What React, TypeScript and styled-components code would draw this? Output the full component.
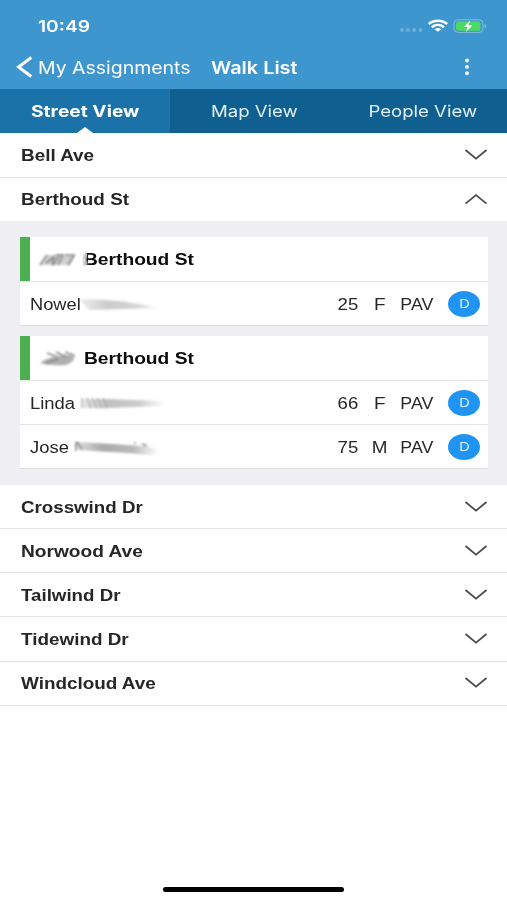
import React from "react";
import styled, { createGlobalStyle } from "styled-components";

const Global = createGlobalStyle`
  * { box-sizing: border-box; }
  html, body { margin: 0; background: #fff; overflow: hidden; }
`;

const Screen = styled.div`
  width: 507px;
  height: 900px;
  display: flex;
  flex-direction: column;
  background: #fff;
  font-family: "Liberation Sans", Arial, sans-serif;
  color: #262626;
  overflow: hidden;
`;

/* Wide lettering: glyphs are stretched horizontally from one edge. */
const Text = styled.span<{ $k?: number; $from?: string; $size?: number; $weight?: number; $sf?: boolean }>`
  display: inline-block;
  white-space: pre;
  transform: scaleX(${(p) => p.$k ?? 1.2});
  transform-origin: ${(p) => p.$from ?? "left"} center;
  font-size: ${(p) => p.$size ?? 16}px;
  line-height: 20px;
  font-weight: ${(p) => p.$weight ?? 400};
  ${(p) => p.$sf && `font-family: Inter, sans-serif;`}
`;

const Header = styled.header`
  height: 89px;
  flex: none;
  background: #3d96cd;
  color: #fff;
`;

const StatusBar = styled.div`
  height: 45px;
  padding: 7px 20px 0 38px;
  display: flex;
  align-items: center;
  justify-content: space-between;
`;

const NavBar = styled.div`
  height: 44px;
  display: grid;
  grid-template-columns: 211px 1fr 80px;
  align-items: center;
  & span { padding-top: 1px; }
`;

const Back = styled.div`
  display: flex;
  align-items: center;
  gap: 5px;
  padding-left: 16px;
`;

const More = styled.div`
  display: flex;
  justify-content: center;
`;

const Tabs = styled.nav`
  height: 44.4px;
  flex: none;
  display: grid;
  grid-template-columns: 170px 168px 169px;
  background: #0f5f90;
  color: #e4f0f8;
`;

const Tab = styled.div<{ $active?: boolean }>`
  position: relative;
  display: flex;
  align-items: center;
  justify-content: center;
  background: ${(p) => (p.$active ? "#1b72a8" : "transparent")};
  color: ${(p) => (p.$active ? "#fff" : "inherit")};
  &::after {
    content: "";
    display: ${(p) => (p.$active ? "block" : "none")};
    position: absolute;
    bottom: 0;
    left: 77px;
    border: 8px solid transparent;
    border-top: 0;
    border-bottom: 6px solid #fff;
  }
`;

const StreetRow = styled.div<{ $open?: boolean }>`
  height: 44.15px;
  flex: none;
  display: flex;
  align-items: center;
  justify-content: space-between;
  padding: 0 19px 0 21px;
  border-bottom: 1px solid ${(p) => (p.$open ? "#efeff4" : "#e4e4e6")};
  & > span { padding-top: 2px; }
`;

const Households = styled.section`
  height: 263.4px;
  flex: none;
  padding: 15.4px 19px 0 20px;
  display: flex;
  flex-direction: column;
  gap: 10px;
  background: #efeff3;
`;

const Card = styled.article`
  background: #fff;
  border-bottom: 1px solid #e0e0e3;
`;

const CardHead = styled.div`
  height: 44px;
  display: flex;
  align-items: center;
  border-left: 10px solid #4caf50;
  padding-left: 8px;
  color: #0c0c0c;
  & > span { padding-top: 2px; }
`;

const Voter = styled.div`
  height: 44px;
  display: grid;
  grid-template-columns: 306px 44px 20px 53px 1fr;
  align-items: center;
  border-top: 1px solid #e4e4e7;
  & > :nth-child(n + 2):nth-child(-n + 4) { justify-self: center; padding-top: 2px; }
`;

const Name = styled.div`
  display: flex;
  align-items: center;
  padding-left: 10px;
`;

const NameSlot = styled.div<{ $w: number }>`
  width: ${(p) => p.$w}px;
  padding-top: 2px;
  display: flex;
`;

const Party = styled.div`
  width: 32px;
  height: 26px;
  border-radius: 50%;
  margin-left: 5px;
  display: flex;
  align-items: center;
  justify-content: center;
  background: #2094f3;
  color: #dff1ff;
  justify-self: start;
`;

const SmudgeOver = styled.svg`
  position: relative;
  z-index: 1;
  flex: none;
  margin-right: -5px;
`;

const HomeArea = styled.footer`
  flex: 1;
  display: flex;
  align-items: flex-end;
  justify-content: center;
  padding-bottom: 8px;
`;

const HomeBar = styled.div`
  width: 181px;
  height: 5px;
  border-radius: 3px;
  background: #000;
`;

const Chevron = ({ up }: { up?: boolean }) => (
  <svg width="24" height="12" viewBox="0 0 24 12" fill="none" stroke="#4a4a4a" strokeWidth="1.7">
    <path d={up ? "M1.5 10.7 12 2 22.5 10.7" : "M1.5 1 12 9.7 22.5 1"} />
  </svg>
);

const StatusIcons = () => (
  <svg width="88" height="18" viewBox="0 0 88 18">
    <g fill="#6db0dc">
      <circle cx="3" cy="13" r="1.9" /><circle cx="9" cy="13" r="1.9" />
      <circle cx="15.2" cy="13" r="1.9" /><circle cx="21.5" cy="13" r="1.9" />
    </g>
    <g fill="none" stroke="#fff" strokeWidth="2.4">
      <path d="M29.6 7c5-4.300 13.600-4.300 18.600 0" />
      <path d="M32.800 10.200c3.600-2.900 8.600-2.900 12.200 0" />
    </g>
    <path d="M35.500 12.200c2-1.600 4.800-1.600 6.800 0l-3.400 2.600z" fill="#fff" />
    <rect x="55" y="2.800" width="29" height="12.600" rx="3.800" fill="none" stroke="#83bce1" strokeWidth="1" />
    <rect x="57" y="4.500" width="24.500" height="9.300" rx="2" fill="#4cd964" />
    <path d="M85.500 7.200c2.200.4 2.200 3.600 0 4z" fill="#83bce1" />
    <path d="M71.200 3.600 65 10.100h3.800L66.800 15 73.400 8.400h-3.900z" fill="#fff" />
  </svg>
);

const Defs = () => (
  <defs>
    <filter id="soft" x="-20%" y="-60%" width="140%" height="220%"><feGaussianBlur stdDeviation="1.3" /></filter>
    <filter id="fine" x="-20%" y="-60%" width="140%" height="220%"><feGaussianBlur stdDeviation=".8" /></filter>
    <linearGradient id="fade" gradientUnits="userSpaceOnUse" x1="0" y1="0" x2="88" y2="0">
      <stop offset="0" stopColor="#bbb" stopOpacity=".4" />
      <stop offset=".35" stopColor="#aaa" />
      <stop offset=".7" stopColor="#bbb" />
      <stop offset="1" stopColor="#ccc" stopOpacity="0" />
    </linearGradient>
  </defs>
);

const NumberSmudge = ({ second }: { second?: boolean }) => (
  <SmudgeOver width="51" height="22" viewBox="0 0 51 22" fill="none">
    <Defs />
    {second ? (
      <>
        <path d="M2 16Q14 7 34 8 40 13 28 18 12 19 2 16Z" fill="#b0b0b0" filter="url(#soft)" />
        <path d="M9 6l10 4M18 5l10 5M27 5l10 4M8 16l13-4" stroke="#888" strokeWidth="1.600" filter="url(#fine)" />
        <path d="M36 14h9" stroke="#ddd" strokeWidth="6" filter="url(#soft)" />
      </>
    ) : (
      <>
        <path d="M2 17 9 7h28l-5 10Z" fill="#d0d0d0" filter="url(#soft)" />
        <path d="M2 17 9 7M8 15l8-6-2 8M15 17l6-9M18 7h7l-5 10M27 7h9l-6 10" stroke="#8a8a8a" strokeWidth="1.600" filter="url(#fine)" />
        <path d="M48 4l-2 7 1 7" stroke="#e4e4e4" strokeWidth="4" filter="url(#fine)" />
        <path d="M45 15h5M48 7l-2 4" stroke="#bbb" strokeWidth="2.500" filter="url(#fine)" />
      </>
    )}
  </SmudgeOver>
);

const NameSmudge = ({ kind }: { kind: number }) => (
  <svg width="96" height="24" viewBox="0 0 96 24" fill="none">
    <Defs />
    {kind === 0 && (
      <>
        <path d="M2 7Q45 7 82 16L12 18Z" fill="url(#fade)" opacity=".6" filter="url(#soft)" />
        <path d="M14 17.500h64" stroke="#bbb" strokeWidth="1.800" strokeDasharray="2 1.500" filter="url(#fine)" />
      </>
    )}
    {kind === 1 && (
      <>
        <path d="M4 8h24l60 2v5L28 17H4Z" fill="url(#fade)" opacity=".75" filter="url(#soft)" />
        <path d="M4 7v10M9 7l4 10M14 7l5 10M19 7l5 10M25 7l4 10" stroke="#aaa" strokeWidth="1.200" filter="url(#fine)" />
      </>
    )}
    {kind === 2 && (
      <>
        <path d="M3 7 25 8 72 11 90 15 80 20 55 18 5 15Z" fill="url(#fade)" filter="url(#soft)" />
        <path d="M4 7v9M5 7l5 7M63 7v2M70 9l5 2" stroke="#888" strokeWidth="1.500" filter="url(#fine)" />
      </>
    )}
  </svg>
);

const VoterRow = ({ name, k, slot, age, sex, kind }: { name: string; k: number; slot: number; age: string; sex: string; kind: number }) => (
  <Voter>
    <Name>
      <NameSlot $w={slot}><Text $k={k}>{name}</Text></NameSlot>
      <NameSmudge kind={kind} />
    </Name>
    <Text $from="center" $k={1.16}>{age}</Text>
    <Text $from="center" $k={1.18}>{sex}</Text>
    <Text $from="center" $k={1.11}>PAV</Text>
    <Party><Text $from="center" $size={12} $k={1.2}>D</Text></Party>
  </Voter>
);

const Street = ({ name, k = 1.18, open }: { name: string; k?: number; open?: boolean }) => (
  <StreetRow $open={open}>
    <Text $k={k} $weight={700}>{name}</Text>
    <Chevron up={open} />
  </StreetRow>
);

export default function App() {
  return (
    <Screen>
      <Global />
      <Header>
        <StatusBar>
          <Text $sf $size={16} $weight={600} $k={1.2}>10:49</Text>
          <StatusIcons />
        </StatusBar>
        <NavBar>
          <Back>
            <svg width="17" height="24" viewBox="0 0 17 24" fill="none" stroke="#fff" strokeWidth="3">
              <path d="M15.300 2.500 2.500 12 15.300 21.500" />
            </svg>
            <Text $sf $size={17} $k={1.145}>My Assignments</Text>
          </Back>
          <Text $sf $size={17} $weight={600} $k={1.17}>Walk List</Text>
          <More>
            <svg width="6" height="18" viewBox="0 0 6 18" fill="#fff">
              <circle cx="3" cy="2.500" r="1.900" /><circle cx="3" cy="8.800" r="1.900" /><circle cx="3" cy="15.200" r="1.900" />
            </svg>
          </More>
        </NavBar>
      </Header>
      <Tabs>
        <Tab $active><Text $sf $size={16} $from="center" $weight={700} $k={1.2}>Street View</Text></Tab>
        <Tab><Text $sf $size={16} $from="center" $k={1.16}>Map View</Text></Tab>
        <Tab><Text $sf $size={16} $from="center" $k={1.16}>People View</Text></Tab>
      </Tabs>
      <Street name="Bell Ave" />
      <Street name="Berthoud St" open />
      <Households>
        <Card>
          <CardHead><NumberSmudge /><Text $k={1.2} $weight={700}>Berthoud St</Text></CardHead>
          <VoterRow name="Nowel" k={1.14} slot={47} age="25" sex="F" kind={0} />
        </Card>
        <Card>
          <CardHead><NumberSmudge second /><Text $k={1.2} $weight={700}>Berthoud St</Text></CardHead>
          <VoterRow name="Linda" k={1.15} slot={48} age="66" sex="F" kind={1} />
          <VoterRow name="Jose" k={1.15} slot={42} age="75" sex="M" kind={2} />
        </Card>
      </Households>
      <Street name="Crosswind Dr" k={1.17} />
      <Street name="Norwood Ave" k={1.195} />
      <Street name="Tailwind Dr" k={1.17} />
      <Street name="Tidewind Dr" />
      <Street name="Windcloud Ave" />
      <HomeArea><HomeBar /></HomeArea>
    </Screen>
  );
}
